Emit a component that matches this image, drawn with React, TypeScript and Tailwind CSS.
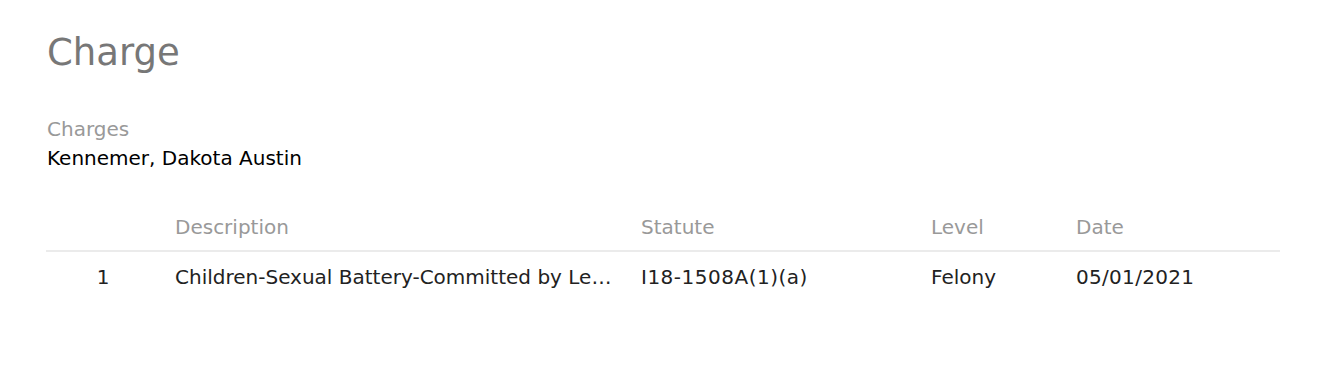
import React from "react";

type Charge = {
    no: number;
    description: string;
    statute: string;
    level: string;
    date: string;
};

const charges: Charge[] = [
    {
        no: 1,
        description: "Children-Sexual Battery-Committed by Legal Adult Upon Child Under 16",
        statute: "I18-1508A(1)(a)",
        level: "Felony",
        date: "05/01/2021",
    },
];

const cols = "grid grid-cols-[114px_466px_290px_145px_1fr]";

export default function App() {
    return (
        <div className="min-h-[392px] bg-white px-[47px] pt-[31px] font-['DejaVu_Sans',Verdana,sans-serif]">
            <h1 className="text-[37px] leading-[44px] text-[#777777]">Charge</h1>

            <div className="mt-[38px] text-[20px] leading-[30px]">
                <div className="pt-px text-[#999999]">Charges</div>
                <div className="-mt-px text-black">Kennemer, Dakota Austin</div>
            </div>

            <div className="mt-[29px] mr-[10px] -ml-px text-[20px] leading-[30px]">
                <div className={`${cols} border-b-2 border-[#ebebeb] text-[#999999]`}>
                    <div className="pt-[10px] pb-[8px]" />
                    <div className="px-[15px] pt-[10px] pb-[8px]">Description</div>
                    <div className="px-[15px] pt-[10px] pb-[8px]">Statute</div>
                    <div className="px-[15px] pt-[10px] pb-[8px]">Level</div>
                    <div className="px-[15px] pt-[10px] pb-[8px]">Date</div>
                </div>
                {charges.map((c) => (
                    <div key={c.no} className={`${cols} text-[#222222]`}>
                        <div className="py-[10px] text-center">{c.no}</div>
                        <div className="truncate pl-[15px] pr-[8px] py-[10px]">{c.description}</div>
                        <div className="px-[15px] py-[10px] tracking-[0.5px]">{c.statute}</div>
                        <div className="px-[15px] py-[10px]">{c.level}</div>
                        <div className="px-[15px] py-[10px] tracking-[0.3px]">{c.date}</div>
                    </div>
                ))}
            </div>
        </div>
    );
}
